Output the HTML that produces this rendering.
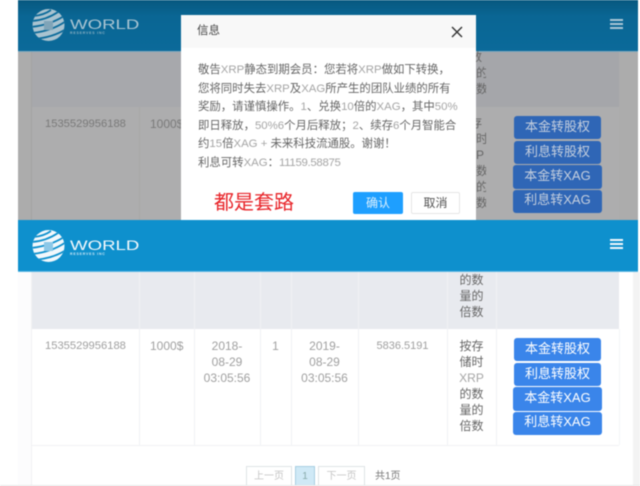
<!DOCTYPE html>
<html lang="zh">
<head>
<meta charset="utf-8">
<title>WORLD</title>
<style>
html,body{margin:0;padding:0;background:#fff}
body{width:640px;height:486px;overflow:hidden;position:relative;font-family:"Liberation Sans","Noto Sans CJK SC",sans-serif;color:#666}
div,span{position:absolute;box-sizing:border-box}
#all{left:0;top:0;width:640px;height:486px;overflow:hidden;filter:blur(.5px)}
.t{white-space:nowrap;line-height:1}
.c{text-align:center}
.btn{border-radius:3px;color:#fff;text-align:center;font-size:13px;white-space:nowrap}
.vl{width:1px}
.l{position:static;color:#a5a5a5}
.m{font-size:11.4px;color:#666}
svg{position:absolute}
</style>
</head>
<body>
<div id="all">
  <!-- upper dimmed screen -->
  <div style="left:18px;top:0;width:620px;height:220px;background:#acacac"></div>
  <div style="left:18px;top:0;width:620px;height:51px;background:linear-gradient(#07587f 0,#0a6694 16px,#0b6a9a 100%)"></div>
  <div style="left:18px;top:51px;width:620px;height:1px;background:#7fa8bd"></div>
  <div style="left:32px;top:52px;width:267px;height:55px;background:#a7a8ac"></div>
  <div style="left:476px;top:52px;width:143px;height:55px;background:#a5a6aa"></div>
  <div style="left:32px;top:107px;width:587px;height:113px;background:#adadae"></div>
  <div class="vl" style="left:31px;top:52px;height:168px;background:#a3a3a3"></div>
  <div class="vl" style="left:139px;top:107px;height:113px;background:#a8a8a8"></div>
  <div class="t" style="left:45px;top:119px;font-size:11.2px;color:#7a7a7a">1535529956188</div>
  <div class="t" style="left:150px;top:118px;font-size:12px;color:#7a7a7a">1000$</div>

  <svg style="left:32px;top:9px" width="33" height="32" viewBox="0 0 33 32">
    <defs><clipPath id="g1"><circle cx="16.5" cy="16" r="16"/></clipPath></defs>
    <circle cx="16.5" cy="16" r="16" fill="#a9c3d0"/>
    <g clip-path="url(#g1)" fill="none" stroke="#0b6a9a" stroke-width="1.8">
      <path d="M2 7Q12 6 19 1"/><path d="M0 12Q14 11 26 3"/><path d="M-1 18Q18 16 32 7"/><path d="M0 24Q20 22 34 12"/><path d="M3 30Q22 28 34 20"/>
    </g>
    <rect x="12" y="12" width="9" height="9" fill="#7fa4b8"/>
  </svg>
  <div class="t" style="left:70px;top:18px;font-size:13.5px;color:#a8c4d2;transform:scaleX(1.38);transform-origin:0 0">WORLD</div>
  <div class="t" style="left:70px;top:32px;font-size:3.5px;letter-spacing:.8px;color:#8db1c3;font-weight:bold">RESERVES INC</div>
  <div style="left:610px;top:19px;width:13px;height:2px;background:#a9c6d5"></div>
  <div style="left:610px;top:23px;width:13px;height:2px;background:#a9c6d5"></div>
  <div style="left:610px;top:27px;width:13px;height:2px;background:#a9c6d5"></div>

  <div style="left:476px;top:49px;font-size:12px;line-height:16px;color:#666;width:10px;overflow:hidden;height:50px;text-indent:-6px">数<br>的<br>数</div>
  <div style="left:476px;top:115px;font-size:12px;line-height:16.1px;color:#666;width:10px;overflow:hidden;height:100px;text-indent:-6px">存<br>时<br>P<br>数<br>的<br>数</div>

  <div class="btn" style="left:514px;top:116px;width:87px;height:23px;line-height:21px;background:#2f66b6;color:#c5cfde">本金转股权</div>
  <div class="btn" style="left:514px;top:141px;width:87px;height:23px;line-height:21px;background:#2f66b6;color:#c5cfde">利息转股权</div>
  <div class="btn" style="left:513px;top:165px;width:89px;height:24px;line-height:21px;background:#2f66b6;color:#c5cfde">本金转XAG</div>
  <div class="btn" style="left:513px;top:190px;width:89px;height:23px;line-height:20px;background:#2f66b6;color:#c5cfde">利息转XAG</div>

  <!-- modal -->
  <div style="left:181px;top:15px;width:295px;height:205px;background:#fff"></div>
  <div style="left:181px;top:15px;width:295px;height:33px;background:#f8f8f8"></div>
  <div class="t" style="left:197px;top:26px;font-size:11.5px;color:#444">信息</div>
  <svg style="left:451px;top:26px" width="12" height="12" viewBox="0 0 12 12"><path d="M1 1L11 11M11 1L1 11" stroke="#333" stroke-width="1.4" fill="none"/></svg>
  <div class="t m" style="left:198px;top:65px">敬告<span class="l">XRP</span>静态到期会员：您若将<span class="l">XRP</span>做如下转换，</div>
  <div class="t m" style="left:198px;top:84px">您将同时失去<span class="l">XRP</span>及<span class="l">XAG</span>所产生的团队业绩的所有</div>
  <div class="t m" style="left:198px;top:102px">奖励，请谨慎操作。<span class="l">1</span>、兑换<span class="l">10</span>倍的<span class="l">XAG</span>，其中<span class="l">50%</span></div>
  <div class="t m" style="left:198px;top:121px">即日释放，<span class="l">50%6</span>个月后释放；<span class="l">2</span>、续存<span class="l">6</span>个月智能合</div>
  <div class="t m" style="left:198px;top:139px">约<span class="l">15</span>倍<span class="l">XAG +</span> 未来科技流通股。谢谢！</div>
  <div class="t m" style="left:198px;top:158px">利息可转<span class="l">XAG</span>：<span class="l" style="letter-spacing:-.3px">11159.58875</span></div>
  <div class="t" style="left:214px;top:193px;font-size:20px;color:#e8252a">都是套路</div>
  <div class="btn" style="left:353px;top:192px;width:50px;height:22px;line-height:22px;font-size:12px;background:#1e9fff;border-radius:2px;color:#d9effe">确认</div>
  <div class="btn" style="left:411px;top:192px;width:49px;height:22px;line-height:20px;font-size:12px;background:#fff;border:1px solid #e6e6e6;border-radius:2px;color:#555">取消</div>

  <!-- lower header -->
  <div style="left:18px;top:220px;width:620px;height:51px;background:#0e90cd"></div>
  <div style="left:18px;top:271px;width:620px;height:1px;background:#5fb9e4"></div>
  <svg style="left:32px;top:230px" width="33" height="32" viewBox="0 0 33 32">
    <defs><clipPath id="g2"><circle cx="16.5" cy="16" r="16"/></clipPath></defs>
    <circle cx="16.5" cy="16" r="16" fill="#f2f8fc"/>
    <g clip-path="url(#g2)" fill="none" stroke="#0e90cd" stroke-width="1.8">
      <path d="M2 7Q12 6 19 1"/><path d="M0 12Q14 11 26 3"/><path d="M-1 18Q18 16 32 7"/><path d="M0 24Q20 22 34 12"/><path d="M3 30Q22 28 34 20"/>
    </g>
    <rect x="12" y="12" width="9" height="9" fill="#8cc8e8"/>
  </svg>
  <div class="t" style="left:70px;top:239px;font-size:13.5px;color:#f2f8fc;transform:scaleX(1.38);transform-origin:0 0">WORLD</div>
  <div class="t" style="left:70px;top:253px;font-size:3.5px;letter-spacing:.8px;color:#cfe8f6;font-weight:bold">RESERVES INC</div>
  <div style="left:610px;top:239px;width:13px;height:2px;background:#f2f8fc"></div>
  <div style="left:610px;top:243px;width:13px;height:2px;background:#f2f8fc"></div>
  <div style="left:610px;top:247px;width:13px;height:2px;background:#f2f8fc"></div>

  <!-- lower table -->
  <div style="left:633px;top:272px;width:7px;height:214px;background:#f3f3f3"></div>
  <div style="left:18px;top:272px;width:13px;height:214px;background:#fcfcfd"></div>
  <div style="left:32px;top:272px;width:587px;height:213px;background:#fff"></div>
  <div style="left:31px;top:272px;width:1px;height:214px;background:#f1f1f3"></div>
  <div style="left:32px;top:272px;width:587px;height:57px;background:#e8eaef"></div>
  <div style="left:32px;top:445px;width:587px;height:1px;background:#f1f2f4"></div>
  <div style="left:619px;top:329px;width:1px;height:116px;background:#f4f5f7"></div>
  <div class="vl" style="left:139px;top:272px;height:173px;background:#f0f1f4"></div>
  <div class="vl" style="left:194px;top:272px;height:173px;background:#f0f1f4"></div>
  <div class="vl" style="left:260px;top:272px;height:173px;background:#f0f1f4"></div>
  <div class="vl" style="left:291px;top:272px;height:173px;background:#f0f1f4"></div>
  <div class="vl" style="left:358px;top:272px;height:173px;background:#f0f1f4"></div>
  <div class="vl" style="left:447px;top:272px;height:173px;background:#f0f1f4"></div>
  <div class="vl" style="left:496px;top:272px;height:173px;background:#f0f1f4"></div>

  <div class="t c" style="left:447px;top:272px;width:49px;font-size:12px;line-height:16px;color:#666">的数<br>量的<br>倍数</div>

  <div class="t" style="left:45px;top:341px;font-size:11.2px;color:#a0a0a0">1535529956188</div>
  <div class="t" style="left:150px;top:340px;font-size:12px;color:#a0a0a0">1000$</div>
  <div class="t c" style="left:194px;top:338px;width:66px;font-size:12px;line-height:16.2px;color:#a0a0a0">2018-<br>08-29<br>03:05:56</div>
  <div class="t c" style="left:260px;top:340px;width:31px;font-size:12px;color:#a0a0a0">1</div>
  <div class="t c" style="left:291px;top:338px;width:67px;font-size:12px;line-height:16.2px;color:#a0a0a0">2019-<br>08-29<br>03:05:56</div>
  <div class="t c" style="left:358px;top:341px;width:89px;font-size:11px;color:#a0a0a0">5836.5191</div>
  <div class="t c" style="left:447px;top:338px;width:49px;font-size:12px;line-height:16.1px;color:#666">按存<br>储时<br><span class="l">XRP</span><br>的数<br>量的<br>倍数</div>

  <div class="btn" style="left:514px;top:338px;width:87px;height:23px;line-height:21px;background:#3a85ea">本金转股权</div>
  <div class="btn" style="left:514px;top:363px;width:87px;height:23px;line-height:21px;background:#3a85ea">利息转股权</div>
  <div class="btn" style="left:513px;top:387px;width:89px;height:24px;line-height:21px;background:#3a85ea">本金转XAG</div>
  <div class="btn" style="left:513px;top:412px;width:89px;height:23px;line-height:20px;background:#3a85ea">利息转XAG</div>

  <!-- pagination -->
  <div class="t c" style="left:246px;top:466px;width:46px;height:20px;border:1px solid #dfe3e6;font-size:10px;line-height:19px;color:#c5c5c5">上一页</div>
  <div class="t c" style="left:295px;top:466px;width:20px;height:20px;border:1px solid #a8cfe2;background:#cfe9f6;font-size:10px;line-height:19px;color:#8aa">1</div>
  <div class="t c" style="left:318px;top:466px;width:47px;height:20px;border:1px solid #dfe3e6;font-size:10px;line-height:19px;color:#c5c5c5">下一页</div>
  <div class="t" style="left:375px;top:472px;font-size:10px;color:#777">共1页</div>
  <div style="left:0;top:485px;width:640px;height:1px;background:#e6e6e6"></div>
</div>
</body>
</html>
